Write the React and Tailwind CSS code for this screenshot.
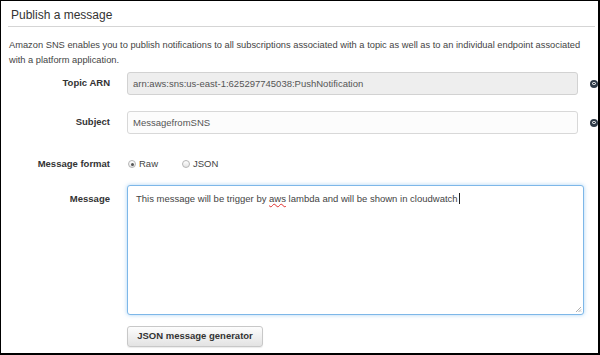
import React from 'react';

const font = "font-['Liberation_Sans',Arial,sans-serif]";

function InfoDot() {
  return (
    <div className="ml-[12px] flex h-[8px] w-[8px] shrink-0 items-center justify-center rounded-full bg-[#2f3b48]">
      <div className="h-[3px] w-[4px] rounded-full border border-white" />
    </div>
  );
}

function Label({ children }) {
  return (
    <div className="w-[109px] shrink-0 text-right text-[9.5px] font-bold text-[#333]">{children}</div>
  );
}

function Radio({ checked, label }) {
  return (
    <label className="flex items-center gap-[3px]">
      <span className="flex h-[8px] w-[8px] items-center justify-center rounded-full border border-[#b5b5b5] bg-gradient-to-b from-white to-[#e4e4e4]">
        {checked && <span className="h-[3px] w-[3px] rounded-full bg-[#555]" />}
      </span>
      <span className="text-[9.5px] text-[#444]">{label}</span>
    </label>
  );
}

export default function App() {
  return (
    <div className={`${font} h-[355px] w-[600px] overflow-hidden border-t border-l border-r-2 border-b-2 border-black bg-white`}>
      {/* header */}
      <div className="ml-[7px] mr-[3px] h-[26px] border-b border-[#d5d5d5] pl-[3px] pt-[7px]">
        <h1 className="text-[12px] leading-[15px] text-[#333]">Publish a message</h1>
      </div>

      <p className="mt-[11px] pl-[8px] pr-[4px] text-[9.3px] leading-[15px] text-[#444]">
        Amazon SNS enables you to publish notifications to all subscriptions associated with a topic as well as to an individual endpoint associated with a platform application.
      </p>

      {/* Topic ARN */}
      <div className="mt-[4px] flex items-center">
        <Label>Topic ARN</Label>
        <input
          readOnly
          value="arn:aws:sns:us-east-1:625297745038:PushNotification"
          className={`${font} ml-[17px] h-[23px] w-[456px] rounded-[3px] border border-[#d2d2d2] bg-[#eeeeee] px-[5px] text-[9.5px] text-[#555] outline-none`}
        />
        <InfoDot />
      </div>

      {/* Subject */}
      <div className="mt-[16px] flex items-center">
        <Label>Subject</Label>
        <input
          readOnly
          value="MessagefromSNS"
          className={`${font} ml-[17px] h-[23px] w-[456px] rounded-[3px] border border-[#d8d8d8] bg-[#fcfcfc] px-[5px] text-[9.5px] text-[#555] outline-none`}
        />
        <InfoDot />
      </div>

      {/* Message format */}
      <div className="mt-[20px] flex h-[20px] items-center">
        <Label>Message format</Label>
        <div className="ml-[18px] flex items-center gap-[24px]">
          <Radio checked label="Raw" />
          <Radio label="JSON" />
        </div>
      </div>

      {/* Message */}
      <div className="mt-[11px] flex items-start">
        <div className="pt-[7px]">
          <Label>Message</Label>
        </div>
        <div className="relative ml-[17px] h-[130px] w-[457px] rounded-[3px] border border-[#7db7e8] bg-white px-[8px] pt-[5px] shadow-[0_0_4px_rgba(102,175,233,0.55)]">
          <p className="text-[9.5px] leading-[13px] text-[#444]">
            This message will be trigger by{' '}
            <span className="underline decoration-wavy decoration-[#e03030] decoration-1 underline-offset-[1px]">aws</span>{' '}
            lambda and will be shown in cloudwatch
            <span className="ml-[1px] inline-block h-[11px] w-px translate-y-[2px] bg-[#222]" />
          </p>
          <svg className="absolute bottom-[1px] right-[1px]" width="7" height="7" viewBox="0 0 7 7">
            <path d="M6 1 L1 6 M6 3.5 L3.5 6 M6 5.5 L5.5 6" stroke="#999" strokeWidth="0.8" />
          </svg>
        </div>
      </div>

      {/* Button */}
      <div className="mt-[7px] pl-[126px]">
        <button className="h-[21px] w-[136px] rounded-[3px] border border-[#c8c8c8] bg-gradient-to-b from-[#fdfdfd] to-[#e3e3e3] text-[9.5px] font-bold text-[#333] shadow-[0_1px_1px_rgba(0,0,0,0.08)]">
          JSON message generator
        </button>
      </div>
    </div>
  );
}
